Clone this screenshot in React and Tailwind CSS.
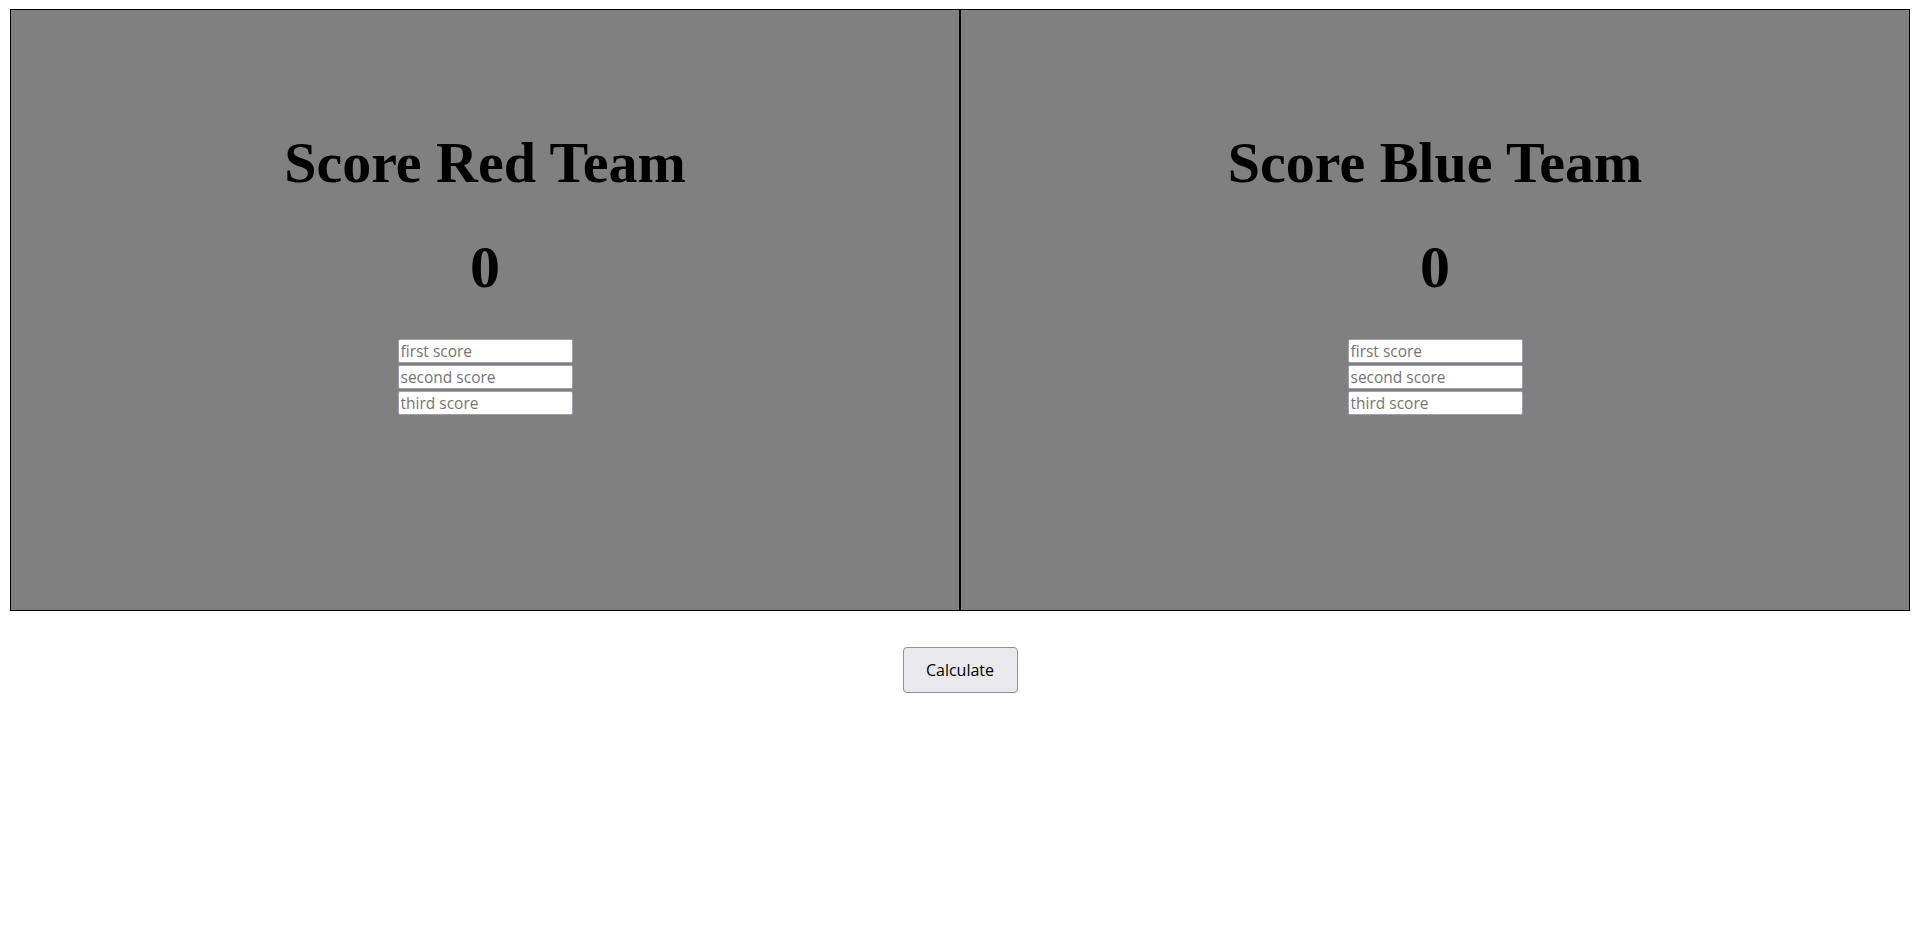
import React from "react";

function Panel({ title }) {
  return (
    <div className="flex-1 h-[602px] border border-black bg-[#808080] flex flex-col items-center pt-[118px]">
      <h1 className="m-0 text-[58px] leading-[69px] font-bold text-black" style={{ fontFamily: '"Liberation Serif", "Times New Roman", serif' }}>
        {title}
      </h1>
      <div className="mt-[36px] text-[60px] leading-[69px] font-bold text-black" style={{ fontFamily: '"Liberation Serif", "Times New Roman", serif' }}>
        0
      </div>
      <div className="mt-[37px] flex flex-col gap-[2px]">
        {["first score", "second score", "third score"].map((p) => (
          <input
            key={p}
            type="text"
            placeholder={p}
            className="w-[175px] h-[24px] bg-white border border-[#a0a0b0] rounded-[2px] px-[2px] text-[15.5px] text-black placeholder:text-[#757575] outline-none"
            style={{ fontFamily: '"Open Sans", "Noto Sans", sans-serif' }}
          />
        ))}
      </div>
    </div>
  );
}

export default function App() {
  return (
    <div className="w-full bg-white pt-[9px] px-[10px]">
      <div className="flex w-full">
        <Panel title="Score Red Team" />
        <Panel title="Score Blue Team" />
      </div>
      <div className="flex justify-center mt-[36px]">
        <button
          className="w-[115px] h-[46px] bg-[#e9e9ed] border border-[#8f8f9d] rounded-[4px] text-[16px] text-black"
          style={{ fontFamily: '"Open Sans", "Noto Sans", sans-serif' }}
        >
          Calculate
        </button>
      </div>
    </div>
  );
}
